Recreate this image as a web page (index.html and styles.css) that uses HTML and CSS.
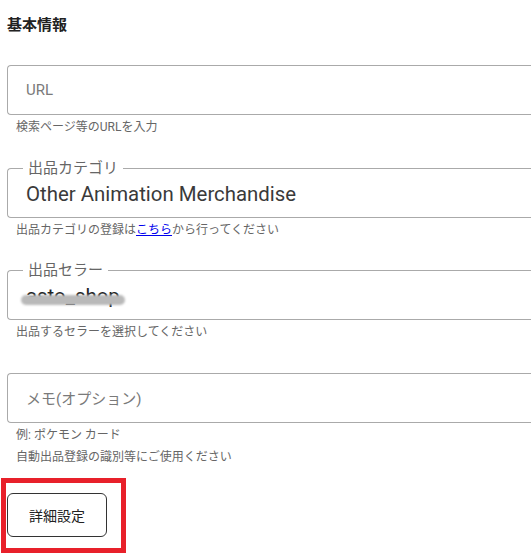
FILE: index.html
```html
<!DOCTYPE html>
<html lang="ja">
<head>
  <meta charset="UTF-8" />
  <meta name="viewport" content="width=device-width, initial-scale=1" />
  <title>基本情報</title>
  <link rel="stylesheet" href="styles.css">
</head>
<body>

<div class="page">
  <h2 class="section-title">基本情報</h2>

  <!-- URL -->
  <div class="form-group">
    <div class="field">
      <span class="placeholder">URL</span>
    </div>
    <p class="helper">検索ページ等のURLを入力</p>
  </div>

  <!-- 出品カテゴリ -->
  <div class="form-group">
    <div class="field">
      <span class="field-label">出品カテゴリ</span>
      <span class="value">Other Animation Merchandise</span>
    </div>
    <p class="helper">出品カテゴリの登録は<a href="#">こちら</a>から行ってください</p>
  </div>

  <!-- 出品セラー -->
  <div class="form-group">
    <div class="field">
      <span class="field-label">出品セラー</span>
      <span class="value masked">asto_shop<span class="mask"></span></span>
    </div>
    <p class="helper">出品するセラーを選択してください</p>
  </div>

  <!-- メモ -->
  <div class="form-group">
    <div class="field">
      <span class="placeholder">メモ(オプション)</span>
    </div>
    <p class="helper">例: ポケモン カード</p>
    <p class="helper">自動出品登録の識別等にご使用ください</p>
  </div>

  <div class="highlight">
    <button class="detail-btn">詳細設定</button>
  </div>
</div>

</body>
</html>
```

FILE: styles.css
```css
* {
  margin: 0; padding: 0; box-sizing: border-box;
}
html, body {
  background: #fff;
  overflow: hidden;
}
body {
  font-family: Roboto, "Noto Sans CJK JP", sans-serif;
  color: #222;
}
.page {
  padding: 14px 0 0 7px;
}
.section-title {
  font-size: 15px;
  font-weight: bold;
  line-height: 22px;
  color: #222;
  margin-bottom: 29px;
}
.form-group + .form-group {
  margin-top: 30.5px;
}
/* 右端は画面外に続くので右ボーダーなし */
.field {
  position: relative;
  width: 100%;
  height: 50px;
  border: 1px solid #aaa;
  border-right: none;
  border-radius: 4px 0 0 4px;
  display: flex;
  align-items: center;
  padding-left: 18px;
}
.field-label {
  position: absolute;
  top: -11px;
  left: 15px;
  padding: 0 5px;
  background: #fff;
  font-size: 15px;
  line-height: 20px;
  color: #666;
}
.placeholder {
  font-size: 15px;
  color: #7a7a7a;
}
.value {
  font-size: 20.4px;
  color: #3a3a3a;
  padding-top: 2px;
}
.masked {
  position: relative;
  color: #222;
}
.mask {
  position: absolute;
  left: -5px;
  right: -5px;
  top: 13px;
  height: 10px;
  border-radius: 5px;
  background: #b9b9b9;
  filter: blur(1px);
}
.helper {
  margin-top: 2px;
  font-size: 12px;
  line-height: 20px;
  color: #666;
  padding-left: 9px;
}
.helper a {
  color: #0000ee;
  text-decoration: underline;
}
.highlight {
  display: inline-block;
  margin: 11px 0 0 -6px;
  border: 5px solid #e8202a;
  padding: 10px 14px 11px 1px;
}
.detail-btn {
  display: block;
  width: 100px;
  height: 44px;
  border: 1px solid #333;
  border-radius: 6px;
  background: #fff;
  font-family: Roboto, "Noto Sans CJK JP", sans-serif;
  font-size: 14px;
  color: #222;
  cursor: pointer;
}
```
